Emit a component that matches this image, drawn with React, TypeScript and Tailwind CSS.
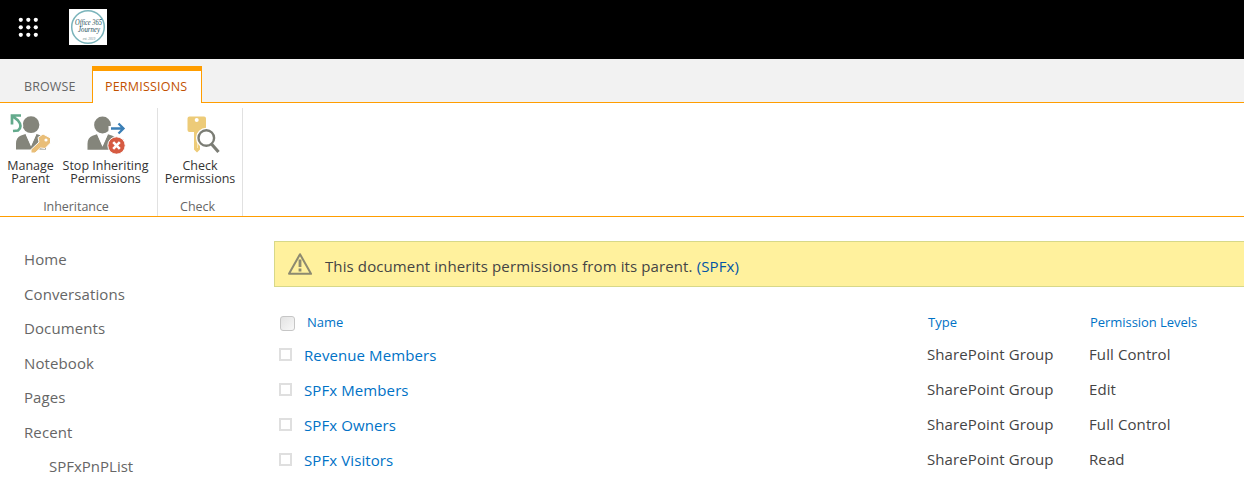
import type { ReactNode } from "react";

const navItems = ["Home", "Conversations", "Documents", "Notebook", "Pages", "Recent"];

const groups = [
  { name: "Revenue Members", type: "SharePoint Group", level: "Full Control" },
  { name: "SPFx Members", type: "SharePoint Group", level: "Edit" },
  { name: "SPFx Owners", type: "SharePoint Group", level: "Full Control" },
  { name: "SPFx Visitors", type: "SharePoint Group", level: "Read" },
];

function Waffle() {
  return (
    <svg width="20" height="20" viewBox="0 0 20 20" fill="#ffffff">
      {[2.8, 10.3, 17.8].map((y) =>
        [2.8, 10.3, 17.8].map((x) => <circle key={`${x}-${y}`} cx={x} cy={y} r="2.1" />),
      )}
    </svg>
  );
}

function SiteLogo() {
  return (
    <svg width="38" height="36" viewBox="0 0 38 36">
      <rect width="38" height="36" fill="#ffffff" />
      <circle cx="19" cy="18" r="16.3" fill="none" stroke="#79b3ba" strokeWidth="1.5" />
      <g
        fill="#244f57"
        fontFamily="'Liberation Serif', serif"
        fontStyle="italic"
        textAnchor="middle"
      >
        <text x="19.5" y="16" fontSize="7.5" textLength="27" lengthAdjust="spacingAndGlyphs">
          Office 365
        </text>
        <text x="20" y="23" fontSize="7.5" textLength="22" lengthAdjust="spacingAndGlyphs">
          Journey
        </text>
        <text x="20" y="31" fontSize="3.5" fill="#6c8b90">
          est. 2019
        </text>
      </g>
    </svg>
  );
}

function Person() {
  return (
    <>
      <circle cx="21.5" cy="11.7" r="8.4" fill="#84857b" />
      <path
        d="M6.500 36.500v-6q0-6 5-8l4.500-1.500 5.500 12.500 5.500-12.500 4.500 1.500q5 2 5 8v6z"
        fill="#84857b"
      />
      <path d="M16.500 21.500h10l-5 11z" fill="#ffffff" />
    </>
  );
}

function ManageParentIcon() {
  return (
    <svg width="42" height="41" viewBox="0.5 0 42 41">
      <Person />
      <path d="M4 4l5.500 4.500q4 5-1.500 8.500" fill="none" stroke="#ffffff" strokeWidth="5.500" />
      <path
        d="M11.500 2.500H2.500V11.500M3 3l5.500 4.500q5 6 0 10l-5 .5"
        fill="none"
        stroke="#63aa8c"
        strokeWidth="2.700"
      />
      <path
        d="M28.500 24.500l5-3.500 7.500 4v5l-5.500 5.500-4.500-.5-5.500 5h-4v-3.500l8-7.500z"
        fill="#e9be78"
        stroke="#ffffff"
        strokeWidth="1"
      />
      <circle cx="36.500" cy="27" r="1.600" fill="#ffffff" />
    </svg>
  );
}

function StopInheritingIcon() {
  return (
    <svg width="42" height="41" viewBox="0.5 0 42 41">
      <g transform="translate(-3.5 0.3)">
        <Person />
      </g>
      <path d="M24 15.500h14M33 9.500l6 6-6 6" fill="none" stroke="#ffffff" strokeWidth="5" />
      <path d="M26.500 15.500h12M34 10.500l5 5-5 5" fill="none" stroke="#3b7fb6" strokeWidth="2.300" />
      <circle cx="32" cy="32.500" r="8.700" fill="#d65b42" stroke="#ffffff" strokeWidth="1" />
      <path d="M28.700 29.200l6.600 6.600M35.300 29.200l-6.600 6.600" stroke="#ffffff" strokeWidth="2.600" />
    </svg>
  );
}

function CheckPermissionsIcon() {
  return (
    <svg width="42" height="41" viewBox="0 0 42 41">
      <path
        d="M10.500 3.500h14.500q2 0 2 2v11.500q0 2-2 2h-4v17.500l-3 3-3-3V19h-4.500q-2 0-2-2V5.500q0-2 2-2z"
        fill="#edcb78"
      />
      <circle cx="17.700" cy="7" r="2" fill="#ffffff" />
      <path d="M18.500 20v15" stroke="#f7e6b9" strokeWidth="1" />
      <circle cx="27.300" cy="25" r="8.300" fill="#ffffff" stroke="#ffffff" strokeWidth="4" />
      <circle cx="27.300" cy="25" r="7.800" fill="#ffffff" stroke="#7b7d75" strokeWidth="2.400" />
      <path d="M32.500 31l7 8" stroke="#7b7d75" strokeWidth="3.200" />
    </svg>
  );
}

function WarningIcon() {
  return (
    <svg width="26" height="24" viewBox="0 0 26 24">
      <path
        d="M13 2.200L24 21.800H2z"
        fill="none"
        stroke="#8d8a70"
        strokeWidth="2"
        strokeLinejoin="round"
      />
      <path d="M13 7.500v7.500M13 16.500v3" stroke="#8d8a70" strokeWidth="2.800" />
    </svg>
  );
}

function RibbonButton({
  icon,
  lines,
  className,
}: {
  icon: ReactNode;
  lines: [string, string];
  className: string;
}) {
  return (
    <button className={`flex flex-none flex-col items-center ${className}`}>
      {icon}
      <span className="mt-[5px] block whitespace-nowrap text-center text-[12.5px] leading-[13px] text-[#333333]">
        {lines[0]}
        <br />
        {lines[1]}
      </span>
    </button>
  );
}

function RibbonGroup({
  label,
  className,
  children,
}: {
  label: string;
  className: string;
  children: ReactNode;
}) {
  return (
    <div className={`flex h-[108px] flex-none flex-col border-r border-[#e1e1e1] ${className}`}>
      <div className="flex h-[90px] flex-none pt-[5px]">{children}</div>
      <div className="pr-[5px] text-center text-[12.5px] leading-[18px] tracking-[-0.05px] text-[#666666]">
        {label}
      </div>
    </div>
  );
}

export default function App() {
  return (
    <div className="flex h-[479px] w-[1244px] flex-col overflow-hidden bg-white font-['Open_Sans','Noto_Sans',sans-serif] text-[#444444]">
      <header className="flex h-[59px] flex-none items-start bg-black pl-[18px]">
        <div className="pt-[17px]">
          <Waffle />
        </div>
        <div className="pl-[31px] pt-[9px]">
          <SiteLogo />
        </div>
      </header>

      <div className="flex h-[44px] flex-none items-stretch bg-[#f2f2f2] pt-[7px] text-[12.5px]">
        <div className="w-[92px] border-b border-[#ff9d00] pl-6 pt-[12px] leading-[18px] tracking-[0.1px] text-[#666666]">
          BROWSE
        </div>
        <div className="w-[110px] border-x border-t-[5px] border-[#ff9d00] bg-white pl-3 pt-[7px] leading-[18px] tracking-[0.2px] text-[#c25100]">
          PERMISSIONS
        </div>
        <div className="flex-1 border-b border-[#ff9d00]" />
      </div>

      <div className="flex h-[114px] flex-none border-b border-[#ff9d00] pt-[5px]">
        <RibbonGroup label="Inheritance" className="w-[158px]">
          <RibbonButton icon={<ManageParentIcon />} lines={["Manage", "Parent"]} className="w-[61px]" />
          <RibbonButton
            icon={<StopInheritingIcon />}
            lines={["Stop Inheriting", "Permissions"]}
            className="w-[89px]"
          />
        </RibbonGroup>
        <RibbonGroup label="Check" className="w-[85px]">
          <RibbonButton
            icon={<CheckPermissionsIcon />}
            lines={["Check", "Permissions"]}
            className="w-[84px]"
          />
        </RibbonGroup>
      </div>

      <div className="flex flex-1 pt-[24px]">
        <nav className="w-[274px] flex-none pl-6 pt-[1px] text-[15px] leading-[34.6px] tracking-[0.1px] text-[#666666]">
          {navItems.map((item) => (
            <div key={item}>{item}</div>
          ))}
          <div className="-mt-px pl-[25px] tracking-[0px]">SPFxPnPList</div>
        </nav>

        <main className="flex-1">
          <div className="flex h-[46px] items-center border border-r-0 border-[#d7d889] bg-[#fff19d] pl-[12px] text-[15px] tracking-[0.11px]">
            <WarningIcon />
            <span className="pl-[12px] pt-[5px]">
              This document inherits permissions from its parent.{" "}
              <a className="text-[#0254a6]">(SPFx)</a>
            </span>
          </div>

          <div className="mt-[20px] flex h-[30px] items-center text-[13px] text-[#0072c6]">
            <span className="mt-[2px] ml-[6px] size-[15px] rounded-[3px] border border-[#c6c6c6] bg-linear-to-br from-[#e3e3e3] to-[#f8f8f8]" />
            <span className="w-[622px] pl-[12px] pt-px">Name</span>
            <span className="w-[162px] pl-[11px] pt-px">Type</span>
            <span className="pl-[11px] pt-px tracking-[-0.05px]">Permission Levels</span>
          </div>

          {groups.map((group) => (
            <div
              key={group.name}
              className="flex h-[35px] items-center text-[15px] tracking-[0.1px]"
            >
              <span className="ml-[5px] size-[13px] border-2 border-[#dfdfdf] bg-white" />
              <a className="w-[635px] pl-[12px] pt-[2px] text-[#0072c6]">{group.name}</a>
              <span className="w-[162px]">{group.type}</span>
              <span>{group.level}</span>
            </div>
          ))}
        </main>
      </div>
    </div>
  );
}
